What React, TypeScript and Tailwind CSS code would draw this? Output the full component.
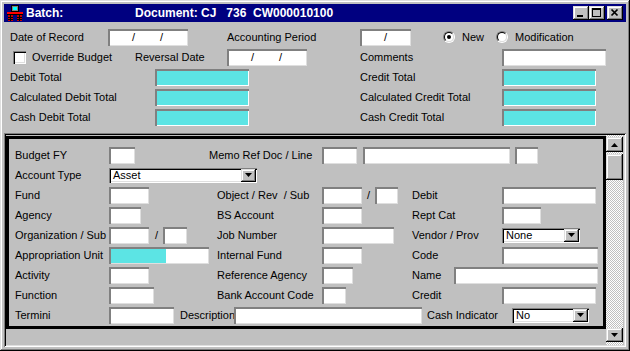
import React from "react";

const F = "h-[17px] shrink-0 bg-white shadow-[inset_2px_2px_#808080,inset_-1px_-1px_#dfdfdf]";
const H =
  "h-[17px] shrink-0 bg-[#5ce4e4] shadow-[inset_2px_2px_#808080,inset_-1px_-1px_#ffffff]";
const R =
  "bg-[#c0c0c0] shadow-[inset_-1px_-1px_#000,inset_1px_1px_#dfdfdf,inset_-2px_-2px_#808080,inset_2px_2px_#fff]";
const TRACK =
  "bg-[image:repeating-conic-gradient(#c0c0c0_0%_25%,#ffffff_0%_50%)] bg-[length:2px_2px]";

function Tri({ up = false }: { up?: boolean }) {
  return (
    <svg width="7" height="4" viewBox="0 0 7 4">
      <path d={up ? "M0 4H7L3.5 0Z" : "M0 0H7L3.5 4Z"} fill="#000" />
    </svg>
  );
}

function L({ c, children }: { c: string; children: React.ReactNode }) {
  return <div className={`shrink-0 whitespace-pre ${c}`}>{children}</div>;
}

function Row({ children }: { children: React.ReactNode }) {
  return <div className="h-[20px] flex items-center">{children}</div>;
}

function Drop({ className, text }: { className: string; text: string }) {
  return (
    <div
      className={`h-[15px] shrink-0 bg-white flex items-center pr-[1px] shadow-[inset_1px_1px_#808080,inset_2px_2px_#000,inset_-1px_-1px_#fff,inset_-2px_-2px_#dfdfdf] ${className}`}
    >
      <span className="flex-1 pl-[4px] leading-[11px]">{text}</span>
      <div className={`w-[15px] h-[13px] flex items-center justify-center ${R}`}>
        <Tri />
      </div>
    </div>
  );
}

function Radio({ checked }: { checked?: boolean }) {
  return (
    <div className="w-[12px] h-[12px] shrink-0 rounded-full border border-t-[#808080] border-l-[#808080] border-r-white border-b-white">
      <div className="w-full h-full rounded-full bg-white border border-t-black border-l-black border-r-[#dfdfdf] border-b-[#dfdfdf] flex items-center justify-center">
        {checked && <div className="w-[4px] h-[4px] rounded-full bg-black" />}
      </div>
    </div>
  );
}

function DateField({ className }: { className: string }) {
  return (
    <div className={`${F} flex items-center ${className}`}>
      <span className="ml-[24px] leading-none">/</span>
      <span className="ml-[25px] leading-none">/</span>
    </div>
  );
}

function TitleIcon() {
  return (
    <svg width="16" height="16" viewBox="0 0 16 16">
      <rect x="4" y="0" width="8" height="7" fill="#808080" />
      <rect x="4.5" y="0.5" width="7" height="6" fill="none" stroke="#000" strokeWidth="1" />
      <rect x="6" y="2" width="4" height="3" fill="#00ffff" />
      <rect x="0" y="7" width="16" height="3" fill="#ff0000" />
      <rect x="0" y="9" width="16" height="1" fill="#000" />
      <rect x="1" y="10" width="5" height="6" fill="#c00000" />
      <rect x="10" y="10" width="5" height="6" fill="#c00000" />
      <rect x="1" y="12" width="5" height="1" fill="#000" />
      <rect x="1" y="14" width="5" height="1" fill="#000" />
      <rect x="10" y="12" width="5" height="1" fill="#000" />
      <rect x="10" y="14" width="5" height="1" fill="#000" />
      <rect x="3" y="10" width="1" height="6" fill="#000" />
      <rect x="12" y="10" width="1" height="6" fill="#000" />
    </svg>
  );
}

function TBtn({ kind }: { kind: "min" | "max" | "close" }) {
  return (
    <div className={`w-[16px] h-[14px] shrink-0 ${R}`}>
      <svg width="16" height="14" viewBox="0 0 16 14">
        {kind === "min" && <rect x="4" y="9" width="6" height="2" fill="#000" />}
        {kind === "max" && (
          <g fill="#000">
            <rect x="3" y="2" width="9" height="2" />
            <rect x="3" y="2" width="1" height="9" />
            <rect x="11" y="2" width="1" height="9" />
            <rect x="3" y="10" width="9" height="1" />
          </g>
        )}
        {kind === "close" && (
          <path d="M4.5 3.5L10.5 9.5M10.5 3.5L4.5 9.5" stroke="#000" strokeWidth="1.7" />
        )}
      </svg>
    </div>
  );
}

export default function App() {
  return (
    <div className="w-[630px] h-[351px] bg-[#c0c0c0] p-[4px] flex flex-col text-[11px] text-black font-['Liberation_Sans',Arial,sans-serif] overflow-hidden shadow-[inset_-1px_-1px_#000,inset_1px_1px_#dfdfdf,inset_-2px_-2px_#808080,inset_2px_2px_#fff]">
      {/* Title bar */}
      <div className="h-[18px] shrink-0 bg-[#000080] flex items-center pl-[3px] pr-[3px] text-white font-bold text-[12px]">
        <TitleIcon />
        <div className="w-[109px] ml-[3px]">Batch:</div>
        <div className="flex-1 whitespace-pre">Document: CJ   736  CW000010100</div>
        <div className="flex items-center">
          <TBtn kind="min" />
          <TBtn kind="max" />
          <div className="w-[2px]" />
          <TBtn kind="close" />
        </div>
      </div>

      {/* Header fields */}
      <div className="mt-[5px] pl-[6px] flex flex-col shrink-0">
        <Row>
          <L c="w-[98px]">Date of Record</L>
          <DateField className="w-[80px]" />
          <L c="w-[172px] pl-[39px]">Accounting Period</L>
          <div className={`${F} w-[51px] flex items-center justify-center`}>
            <span className="leading-none">/</span>
          </div>
          <div className="w-[32px] shrink-0" />
          <Radio checked />
          <L c="w-[41px] pl-[7px]">New</L>
          <Radio />
          <L c="pl-[7px]">Modification</L>
        </Row>
        <Row>
          <div className="w-[125px] shrink-0 flex items-center">
            <div className="ml-[3px] w-[13px] h-[13px] bg-white shadow-[inset_1px_1px_#808080,inset_2px_2px_#000,inset_-1px_-1px_#fff,inset_-2px_-2px_#dfdfdf]" />
            <span className="ml-[6px] whitespace-nowrap">Override Budget</span>
          </div>
          <L c="w-[92px]">Reversal Date</L>
          <DateField className="w-[80px]" />
          <L c="w-[195px] pl-[53px]">Comments</L>
          <div className={`${F} w-[104px]`} />
        </Row>
        <Row>
          <L c="w-[145px]">Debit Total</L>
          <div className={`${H} w-[94px]`} />
          <L c="w-[253px] pl-[111px]">Credit Total</L>
          <div className={`${H} w-[94px]`} />
        </Row>
        <Row>
          <L c="w-[145px]">Calculated Debit Total</L>
          <div className={`${H} w-[94px]`} />
          <L c="w-[253px] pl-[111px]">Calculated Credit Total</L>
          <div className={`${H} w-[94px]`} />
        </Row>
        <Row>
          <L c="w-[145px]">Cash Debit Total</L>
          <div className={`${H} w-[94px]`} />
          <L c="w-[253px] pl-[111px]">Cash Credit Total</L>
          <div className={`${H} w-[94px]`} />
        </Row>
      </div>

      {/* Scroll frame */}
      <div className="mt-[6px] flex-1 flex p-[2px] shadow-[inset_1px_1px_#808080,inset_-1px_-1px_#fff,inset_2px_2px_#000,inset_-2px_-2px_#dfdfdf]">
        <div className="flex-1 flex flex-col">
          <div className="mt-[1px] border-[3px] border-black pt-[6px] pb-[1px] pl-[6px] flex flex-col">
            <Row>
              <L c="w-[94px]">Budget FY</L>
              <div className={`${F} w-[26px]`} />
              <L c="w-[187px] pl-[74px]">Memo Ref Doc / Line</L>
              <div className={`${F} w-[35px]`} />
              <div className={`${F} w-[147px] ml-[6px]`} />
              <div className={`${F} w-[23px] ml-[5px]`} />
            </Row>
            <Row>
              <L c="w-[94px]">Account Type</L>
              <Drop className="w-[148px]" text="Asset" />
            </Row>
            <Row>
              <L c="w-[94px]">Fund</L>
              <div className={`${F} w-[40px]`} />
              <L c="w-[173px] pl-[68px]">Object / Rev  / Sub</L>
              <div className={`${F} w-[40px]`} />
              <L c="w-[13px] pl-[5px]">/</L>
              <div className={`${F} w-[23px]`} />
              <L c="w-[104px] pl-[14px]">Debit</L>
              <div className={`${F} w-[94px]`} />
            </Row>
            <Row>
              <L c="w-[94px]">Agency</L>
              <div className={`${F} w-[32px]`} />
              <L c="w-[181px] pl-[76px]">BS Account</L>
              <div className={`${F} w-[40px]`} />
              <L c="w-[140px] pl-[50px]">Rept Cat</L>
              <div className={`${F} w-[39px]`} />
            </Row>
            <Row>
              <L c="w-[94px]">Organization / Sub</L>
              <div className={`${F} w-[40px]`} />
              <L c="w-[14px] pl-[6px]">/</L>
              <div className={`${F} w-[24px]`} />
              <L c="w-[135px] pl-[30px]">Job Number</L>
              <div className={`${F} w-[72px]`} />
              <L c="w-[108px] pl-[18px]">Vendor / Prov</L>
              <Drop className="w-[78px]" text="None" />
            </Row>
            <Row>
              <L c="w-[94px]">Appropriation Unit</L>
              <div className={`${F} w-[100px] pt-[2px] pl-[2px] pb-[1px] flex`}>
                <div className="w-[55px] h-full bg-[#5ce4e4]" />
              </div>
              <L c="w-[113px] pl-[8px]">Internal Fund</L>
              <div className={`${F} w-[40px]`} />
              <L c="w-[140px] pl-[50px]">Code</L>
              <div className={`${F} w-[96px]`} />
            </Row>
            <Row>
              <L c="w-[94px]">Activity</L>
              <div className={`${F} w-[40px]`} />
              <L c="w-[173px] pl-[68px]">Reference Agency</L>
              <div className={`${F} w-[31px]`} />
              <L c="w-[101px] pl-[59px]">Name</L>
              <div className={`${F} w-[144px]`} />
            </Row>
            <Row>
              <L c="w-[94px]">Function</L>
              <div className={`${F} w-[45px]`} />
              <L c="w-[168px] pl-[63px]">Bank Account Code</L>
              <div className={`${F} w-[24px]`} />
              <L c="w-[156px] pl-[66px]">Credit</L>
              <div className={`${F} w-[94px]`} />
            </Row>
            <Row>
              <L c="w-[94px]">Termini</L>
              <div className={`${F} w-[65px]`} />
              <L c="w-[60px] pl-[6px]">Description</L>
              <div className={`${F} w-[188px]`} />
              <L c="w-[90px] pl-[5px]">Cash Indicator</L>
              <Drop className="w-[77px]" text="No" />
            </Row>
          </div>
        </div>

        {/* Scrollbar */}
        <div className={`w-[17px] mr-[1px] pt-[2px] pb-[3px] flex flex-col ${TRACK}`}>
          <div className={`h-[15px] shrink-0 flex items-center justify-center ${R}`}>
            <Tri up />
          </div>
          <div className={`h-[26px] mt-[2px] shrink-0 ${R}`} />
          <div className="flex-1" />
          <div className={`h-[14px] shrink-0 flex items-center justify-center ${R}`}>
            <Tri />
          </div>
        </div>
      </div>
    </div>
  );
}
